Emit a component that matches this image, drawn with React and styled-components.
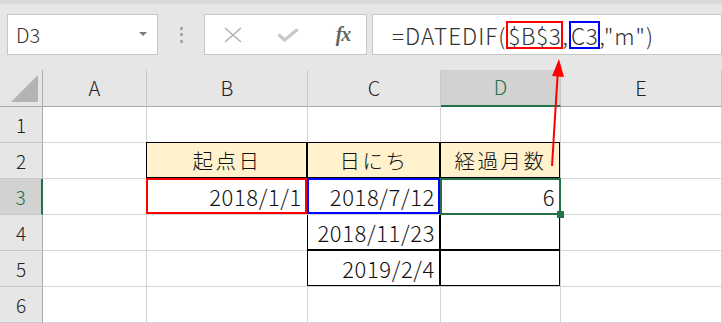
import styled, { createGlobalStyle, css } from "styled-components";

const GlobalStyle = createGlobalStyle`
  html, body {
    margin: 0;
    padding: 0;
    background: #ffffff;
  }
`;

const FONT = `"Noto Sans CJK JP", "Noto Sans", sans-serif`;
const GREEN = "#217346";

const COLUMNS = ["A", "B", "C", "D", "E"];

// each row: cells for A..E, frame: black | red | blue | select
const ROWS = [
  [{}, {}, {}, {}, {}],
  [
    {},
    { text: "起点日", fill: true, align: "center", frame: "black" },
    { text: "日にち", fill: true, align: "center", frame: "black" },
    { text: "経過月数", fill: true, align: "center", frame: "black" },
    {},
  ],
  [
    {},
    { text: "2018/1/1", frame: "red" },
    { text: "2018/7/12", frame: "blue" },
    { text: "6", frame: "select" },
    {},
  ],
  [{}, {}, { text: "2018/11/23", frame: "black" }, { frame: "black" }, {}],
  [{}, {}, { text: "2019/2/4", frame: "black" }, { frame: "black" }, {}],
  [{}, {}, {}, {}, {}],
];

const App = () => {
  return (
    <Screen>
      <GlobalStyle />
      <Toolbar>
        <NameBox>
          D3
          <DropArrow />
        </NameBox>
        <Grip>
          <span />
          <span />
          <span />
        </Grip>
        <FuncBox>
          <FuncIcon>
            <svg width="18" height="16" viewBox="0 0 18 16">
              <path d="M1 1 L17 15 M17 1 L1 15" stroke="#b4b4b4" strokeWidth="1.6" fill="none" />
            </svg>
          </FuncIcon>
          <FuncIcon>
            <svg width="22" height="14" viewBox="0 0 22 14">
              <path d="M1.5 6.5 L7.5 12 L20.5 1.5" stroke="#c8c8c8" strokeWidth="3.4" fill="none" />
            </svg>
          </FuncIcon>
          <FxLabel>fx</FxLabel>
        </FuncBox>
        <FormulaInput>
          =DATEDIF(<Ref $color="#ff0000">$B$3</Ref>,<Ref $color="#0000ff">C3</Ref>,"m")
        </FormulaInput>
      </Toolbar>

      <Sheet>
        <Corner>
          <CornerTriangle />
        </Corner>
        {COLUMNS.map((c) => (
          <ColHead key={c} $active={c === "D"}>
            {c}
          </ColHead>
        ))}
        {ROWS.map((row, r) => (
          <Row key={r} number={r + 1} cells={row} />
        ))}
      </Sheet>

      <Arrow width="722" height="323" viewBox="0 0 722 323">
        <path d="M552 166 L557.6 75" stroke="#ff0000" strokeWidth="2" fill="none" />
        <path d="M559 59 L564 77 L552 76 Z" fill="#ff0000" />
      </Arrow>
    </Screen>
  );
};

const Row = ({ number, cells }) => (
  <>
    <RowHead $active={number === 3}>{number}</RowHead>
    {cells.map((cell, i) => (
      <Cell key={i} $fill={cell.fill} $align={cell.align} $frame={cell.frame}>
        {cell.text}
        {cell.frame === "select" && <FillHandle />}
      </Cell>
    ))}
  </>
);

export default App;

const Screen = styled.div`
  position: relative;
  width: 722px;
  height: 323px;
  overflow: hidden;
  background: #e6e6e6;
  font-family: ${FONT};
  font-weight: 300;
`;

const Toolbar = styled.div`
  height: 70px;
  box-sizing: border-box;
  border-top: 4px solid #d9d9d9;
  padding: 10px 0 0 7px;

  display: flex;
  align-items: flex-start;
`;

const boxBase = css`
  height: 41px;
  box-sizing: border-box;
  background: #ffffff;
  border: 1px solid #c6c6c6;
  display: flex;
  align-items: center;
`;

const NameBox = styled.div`
  ${boxBase};
  width: 151px;
  padding-left: 8px;
  position: relative;

  font-size: 20px;
  color: #333333;
`;

const DropArrow = styled.span`
  position: absolute;
  right: 10px;
  top: 17px;
  width: 0;
  height: 0;
  border-left: 4px solid transparent;
  border-right: 4px solid transparent;
  border-top: 4px solid #7a7a7a;
`;

const Grip = styled.div`
  width: 46px;
  height: 41px;
  display: flex;
  flex-direction: column;
  align-items: center;
  justify-content: center;
  gap: 3.5px;

  span {
    width: 3px;
    height: 3px;
    background: #a8a8a8;
  }
`;

const FuncBox = styled.div`
  ${boxBase};
  width: 163px;
  padding-left: 16px;
  gap: 31px;
`;

const FuncIcon = styled.div`
  width: 24px;
  display: flex;
  justify-content: center;
`;

const FxLabel = styled.div`
  width: 24px;
  text-align: center;
  font-family: "Liberation Serif", "DejaVu Serif", serif;
  font-style: italic;
  font-weight: bold;
  font-size: 20px;
  color: #666666;
  letter-spacing: -1px;
`;

const FormulaInput = styled.div`
  ${boxBase};
  flex: 1;
  margin-left: 5px;
  padding-left: 19px;

  font-size: 22.5px;
  letter-spacing: 1px;
  color: #333333;
  white-space: pre;
`;

const Ref = styled.span`
  display: inline-block;
  box-sizing: border-box;
  height: 28px;
  line-height: 24px;
  border: 2px solid ${(p) => p.$color};
  letter-spacing: 0.6px;
  margin-right: -1px;
`;

const Sheet = styled.div`
  display: grid;
  grid-template-columns: 43px 104px 161px 133px 120px 161px;
  grid-template-rows: 37px repeat(6, 36px);
`;

const headBase = css`
  box-sizing: border-box;
  display: flex;
  align-items: center;
  justify-content: center;
  font-size: 20px;
  color: #222222;
`;

const Corner = styled.div`
  box-sizing: border-box;
  border-right: 1px solid #ababab;
  border-bottom: 1px solid #ababab;
  position: relative;
`;

const CornerTriangle = styled.div`
  position: absolute;
  left: 11px;
  top: 5px;
  width: 0;
  height: 0;
  border-left: 27px solid transparent;
  border-bottom: 27px solid #b4b4b4;
`;

const ColHead = styled.div`
  ${headBase};
  border-right: 1px solid #c8c8c8;
  border-bottom: ${(p) => (p.$active ? `2px solid ${GREEN}` : "1px solid #ababab")};
  background: ${(p) => (p.$active ? "#d2d2d2" : "#e6e6e6")};
  color: ${(p) => (p.$active ? GREEN : "#222222")};
  padding-bottom: 2px;
`;

const RowHead = styled.div`
  ${headBase};
  font-size: 19px;
  border-bottom: 1px solid #c8c8c8;
  border-right: ${(p) => (p.$active ? `2px solid ${GREEN}` : "1px solid #ababab")};
  background: ${(p) => (p.$active ? "#d2d2d2" : "#e6e6e6")};
  color: ${(p) => (p.$active ? GREEN : "#222222")};
`;

const FRAMES = {
  black: css`
    z-index: 1;
    &::after {
      top: -1px;
      left: -1px;
      right: 0;
      bottom: 0;
      border: 1px solid #000000;
    }
  `,
  red: css`
    z-index: 2;
    &::after {
      top: -1px;
      left: -1px;
      right: 0;
      bottom: 0;
      border: 2px solid #ff0000;
    }
  `,
  blue: css`
    z-index: 3;
    &::after {
      top: -1px;
      left: -1px;
      right: 0;
      bottom: 0;
      border: 2px solid #0000ff;
    }
  `,
  select: css`
    z-index: 4;
    &::after {
      top: -1px;
      left: -1px;
      right: -1px;
      bottom: -1px;
      border: 2px solid ${GREEN};
    }
  `,
};

const Cell = styled.div`
  position: relative;
  box-sizing: border-box;
  background: ${(p) => (p.$fill ? "#fff2cc" : "#ffffff")};
  border-right: 1px solid #d4d4d4;
  border-bottom: 1px solid #d4d4d4;

  display: flex;
  align-items: center;
  justify-content: ${(p) => (p.$align === "center" ? "center" : "flex-end")};
  padding: 0 5px 1px 5px;

  font-size: ${(p) => (p.$align === "center" ? "20.5px" : "22px")};
  color: #111111;
  letter-spacing: ${(p) => (p.$align === "center" ? "2.5px" : "0.6px")};
  white-space: nowrap;

  &::after {
    content: "";
    position: absolute;
    box-sizing: border-box;
    pointer-events: none;
  }

  ${(p) => FRAMES[p.$frame]}
  ${(p) => !p.$frame && css`&::after { display: none; }`}
`;

const FillHandle = styled.span`
  position: absolute;
  right: -4px;
  bottom: -4px;
  width: 7px;
  height: 7px;
  background: ${GREEN};
  z-index: 5;
`;

const Arrow = styled.svg`
  position: absolute;
  left: 0;
  top: 0;
  pointer-events: none;
  z-index: 10;
`;
